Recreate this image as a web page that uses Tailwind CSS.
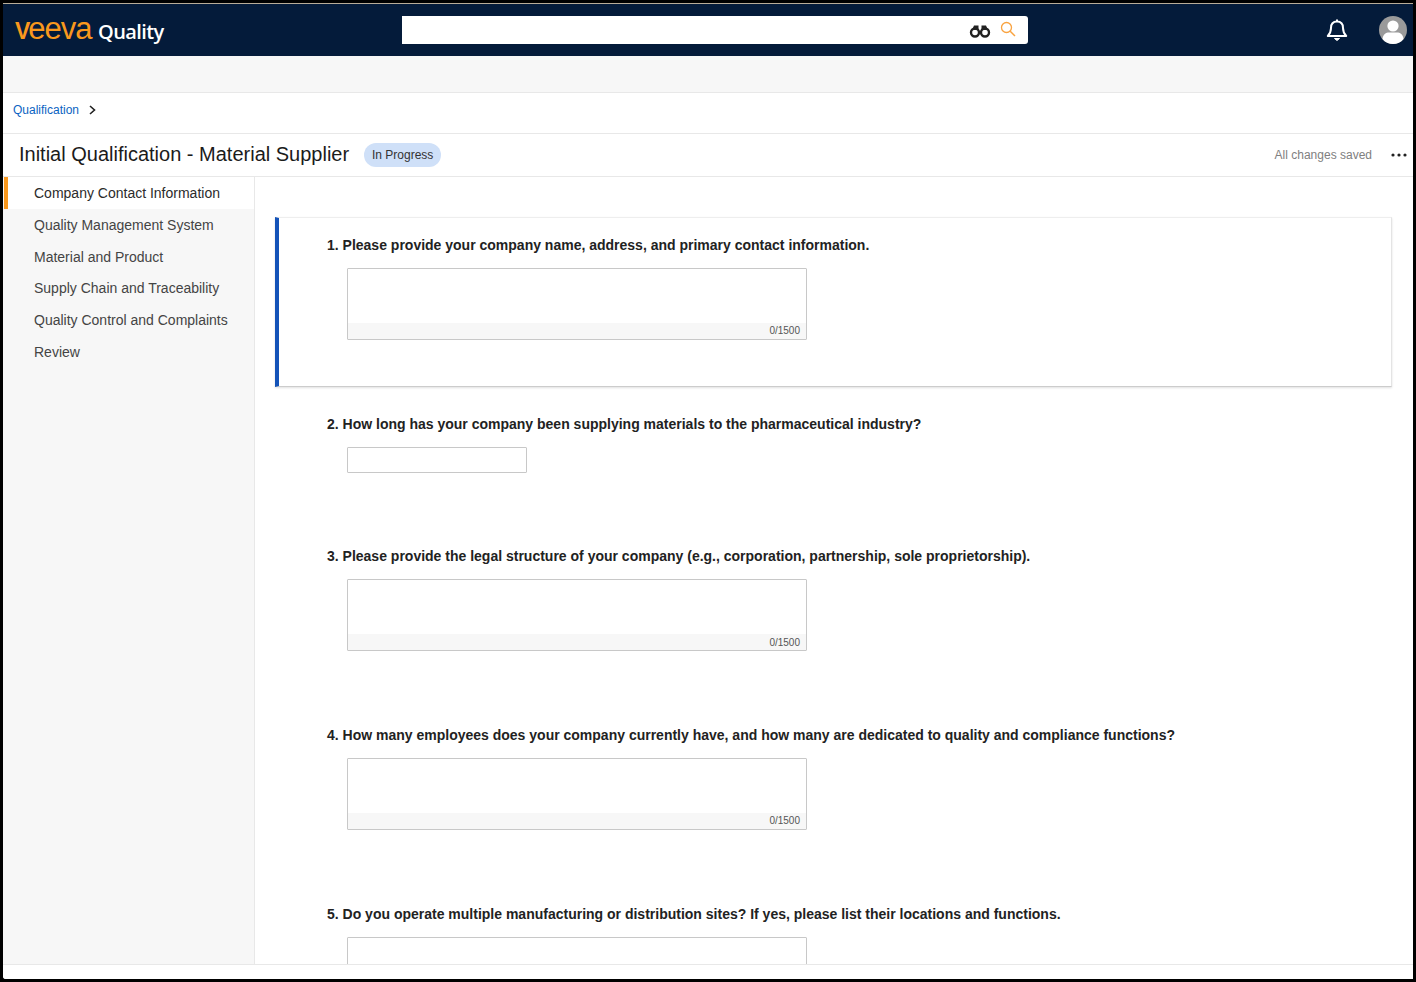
<!DOCTYPE html>
<html lang="en">
<head>
<meta charset="utf-8">
<title>Initial Qualification</title>
<script src="https://cdn.jsdelivr.net/npm/@tailwindcss/browser@4"></script>
</head>
<body class="bg-black overflow-hidden">
<div class="w-[1416px] h-[982px] bg-black pt-[3px] pb-[3px] px-[3px] font-['Liberation_Sans',Arial,sans-serif]">
  <div class="w-[1410px] h-[976px] flex flex-col bg-white overflow-hidden rounded-bl-[3px]">
    <div class="h-px bg-[#b9ad98] shrink-0"></div>
    <header class="h-[52px] shrink-0 bg-[#041b3a] flex items-center relative">
      <div class="ml-[12px] w-[387px] flex items-baseline pb-[3px]">
        <span class="text-[31px] leading-none text-[#f9981d] tracking-[-1px] w-[83px] whitespace-nowrap"><span class="text-[23px] font-bold tracking-[-2px]">V</span>eeva</span>
        <span class="font-['Open_Sans',sans-serif] text-[20px] leading-none font-semibold text-white tracking-[-0.6px]">Quality</span>
      </div>
      <div class="w-[626px] h-[28px] bg-white rounded-r-[3px] flex items-center justify-end pr-[12px] gap-[9px]">
        <svg class="mt-[2px]" width="22" height="14" viewBox="0 0 22 14" fill="none"><circle cx="6" cy="8.5" r="4" stroke="#222" stroke-width="2.4"/><circle cx="16" cy="8.5" r="4" stroke="#222" stroke-width="2.4"/><path d="M3 6 L5 1.5 H9.5 V6 H12.5 V1.5 H17 L19 6 Z" fill="#222"/></svg>
        <svg class="mb-[2px]" width="16" height="16" viewBox="0 0 16 16" fill="none"><circle cx="6.5" cy="6.5" r="5" stroke="#f9a340" stroke-width="1.3"/><path d="M10.2 10.2 L15 15" stroke="#f9a340" stroke-width="1.5"/></svg>
      </div>
      <div class="ml-auto flex items-center">
        <svg class="mr-[31px]" width="22" height="24" viewBox="0 0 22 24" fill="none"><path d="M11 1.5 V3.5 M11 3.5 C6.8 3.5 5 6.5 5 10 C5 14 3.8 15.8 1.8 18 H20.2 C18.2 15.8 17 14 17 10 C17 6.5 15.2 3.5 11 3.5 Z" stroke="#fff" stroke-width="2" stroke-linejoin="round"/><path d="M8.5 20.5 H13.5 L11 22.5 Z" fill="#fff" stroke="#fff"/></svg>
        <svg class="mr-[6px]" width="28" height="28" viewBox="0 0 28 28"><circle cx="14" cy="14" r="14" fill="#9a9a9a"/><circle cx="14" cy="10" r="5.6" fill="#fff"/><path d="M3.5 23 C4 18 7 16.5 10 16.5 H18 C21 16.5 24 18 24.5 23 C22 26.3 18 28 14 28 C10 28 6 26.3 3.5 23 Z" fill="#fff"/></svg>
      </div>
    </header>
    <div class="h-[37px] shrink-0 bg-[#f7f7f7] border-b border-[#e8e8e8]"></div>
    <nav class="h-[41px] shrink-0 border-b border-[#e8e8e8] flex items-center pl-[10px] pb-[7px]">
      <a class="text-[12px] text-[#0a63c2]">Qualification</a>
      <svg class="ml-[10px]" width="7" height="10" viewBox="0 0 7 10" fill="none"><path d="M1 1 L5.5 5 L1 9" stroke="#222" stroke-width="1.6"/></svg>
    </nav>
    <div class="h-[43px] shrink-0 border-b border-[#e8e8e8] flex items-center pl-[16px] pr-[6px]">
      <h1 class="text-[20px] leading-none text-[#1b1b1b] mb-[2px]">Initial Qualification - Material Supplier</h1>
      <span class="ml-[15px] h-[24px] w-[77px] rounded-full bg-[#cfe0f8] text-[12px] text-[#333] flex items-center justify-center">In Progress</span>
      <span class="ml-auto text-[12px] text-[#808080]">All changes saved</span>
      <svg class="ml-[19px] mb-px" width="16" height="4" viewBox="0 0 16 4"><circle cx="2" cy="2" r="1.6" fill="#222"/><circle cx="8" cy="2" r="1.6" fill="#222"/><circle cx="14" cy="2" r="1.6" fill="#222"/></svg>
    </div>
    <div class="flex flex-1 min-h-0">
      <aside class="w-[252px] shrink-0 bg-[#f7f7f7] border-r border-[#e8e8e8] text-[14px] text-[#444] pl-px">
        <div class="h-[32px] bg-white border-l-[4px] border-[#f9981d] pl-[26px] flex items-center text-[#2b2b2b]">Company Contact Information</div>
        <div class="h-[32px] pl-[30px] flex items-center">Quality Management System</div>
        <div class="h-[32px] pl-[30px] flex items-center">Material and Product</div>
        <div class="h-[31px] pl-[30px] flex items-center">Supply Chain and Traceability</div>
        <div class="h-[32px] pl-[30px] flex items-center">Quality Control and Complaints</div>
        <div class="h-[32px] pl-[30px] flex items-center">Review</div>
      </aside>
      <main class="flex-1 min-w-0 overflow-hidden pt-[40px] pl-[20px] pr-[21px]">
        <section class="h-[170px] mb-[9px] border-l-[4px] border-[#1453b8] border-t border-t-[#eeeeee] border-r border-r-[#e4e4e4] border-b border-b-[#cccccc] shadow-[0_1px_2px_rgba(0,0,0,0.12)] pl-[48px] pt-[19px]">
          <p class="text-[14px] leading-[16px] font-bold text-[#222]">1. Please provide your company name, address, and primary contact information.</p>
          <div class="mt-[15px] ml-[20px] w-[460px] h-[72px] border border-[#c8c8c8] rounded-[1px] flex flex-col">
            <div class="flex-1"></div>
            <div class="h-[16px] bg-[#f7f7f7] text-[10px] leading-[16px] text-[#555] text-right pr-[6px]">0/1500</div>
          </div>
        </section>
        <section class="h-[132px] pl-[52px] pt-[20px]">
          <p class="text-[14px] leading-[16px] font-bold text-[#222]">2. How long has your company been supplying materials to the pharmaceutical industry?</p>
          <div class="mt-[15px] ml-[20px] w-[180px] h-[26px] border border-[#c8c8c8] rounded-[1px]"></div>
        </section>
        <section class="h-[179px] pl-[52px] pt-[20px]">
          <p class="text-[14px] leading-[16px] font-bold text-[#222]">3. Please provide the legal structure of your company (e.g., corporation, partnership, sole proprietorship).</p>
          <div class="mt-[15px] ml-[20px] w-[460px] h-[72px] border border-[#c8c8c8] rounded-[1px] flex flex-col">
            <div class="flex-1"></div>
            <div class="h-[16px] bg-[#f7f7f7] text-[10px] leading-[17px] text-[#555] text-right pr-[6px]">0/1500</div>
          </div>
        </section>
        <section class="h-[179px] pl-[52px] pt-[20px]">
          <p class="text-[14px] leading-[16px] font-bold text-[#222]">4. How many employees does your company currently have, and how many are dedicated to quality and compliance functions?</p>
          <div class="mt-[15px] ml-[20px] w-[460px] h-[72px] border border-[#c8c8c8] rounded-[1px] flex flex-col">
            <div class="flex-1"></div>
            <div class="h-[16px] bg-[#f7f7f7] text-[10px] leading-[16px] text-[#555] text-right pr-[6px]">0/1500</div>
          </div>
        </section>
        <section class="h-[179px] pl-[52px] pt-[20px]">
          <p class="text-[14px] leading-[16px] font-bold text-[#222]">5. Do you operate multiple manufacturing or distribution sites? If yes, please list their locations and functions.</p>
          <div class="mt-[15px] ml-[20px] w-[460px] h-[72px] border border-[#c8c8c8] rounded-[1px]"></div>
        </section>
      </main>
    </div>
    <footer class="h-[15px] shrink-0 bg-white border-t border-[#e8e8e8]"></footer>
  </div>
</div>
</body>
</html>
